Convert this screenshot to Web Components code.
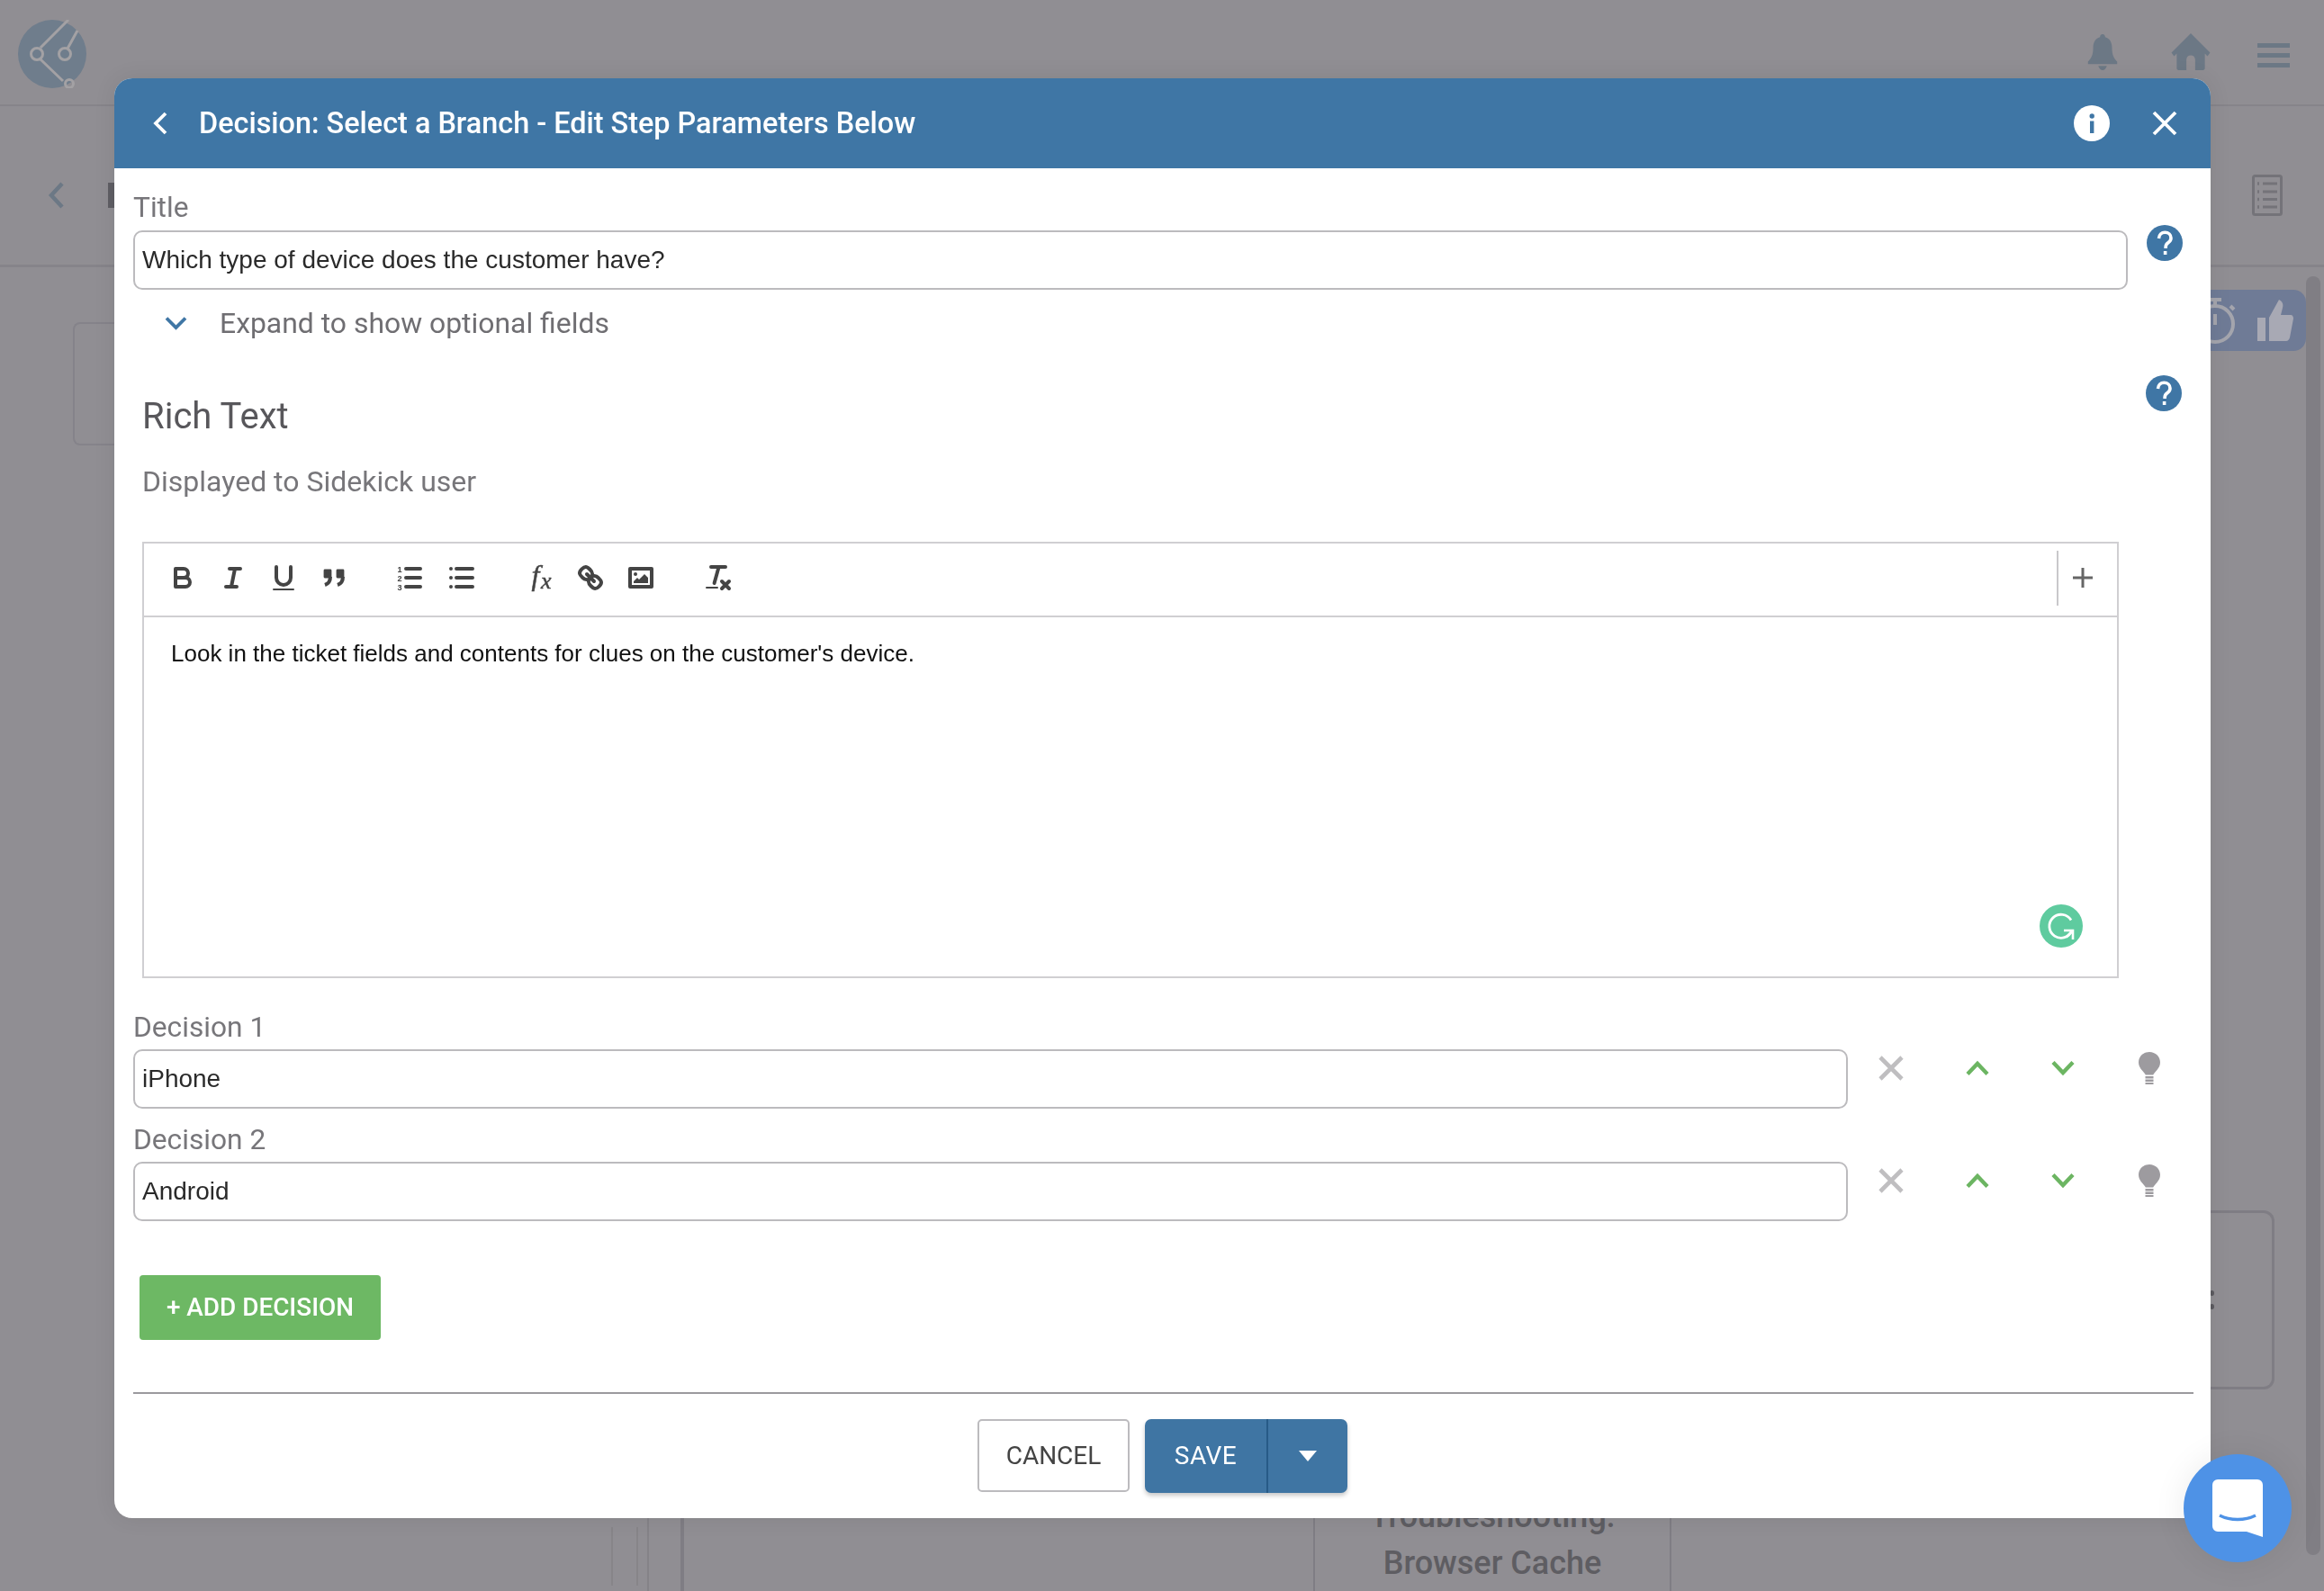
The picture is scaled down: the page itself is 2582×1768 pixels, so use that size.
<!DOCTYPE html>
<html lang="en"><head><meta charset="utf-8"><title>Decision</title>
<style>
html,body{margin:0;padding:0;width:2582px;height:1768px;overflow:hidden;background:#908e93;font-family:Roboto,"Liberation Sans",sans-serif}
</style></head><body>
<app-backdrop></app-backdrop>
<step-dialog heading="Decision: Select a Branch - Edit Step Parameters Below">
  <title-field label="Title" value="Which type of device does the customer have?"></title-field>
  <expand-row>Expand to show optional fields</expand-row>
  <rich-section heading="Rich Text" sub="Displayed to Sidekick user"></rich-section>
  <rich-editor>Look in the ticket fields and contents for clues on the customer's device.</rich-editor>
  <decision-row label="Decision 1" value="iPhone" style="margin-top:35px"></decision-row>
  <decision-row label="Decision 2" value="Android" style="margin-top:15px"></decision-row>
  <add-button>+ ADD DECISION</add-button>
  <dialog-footer></dialog-footer>
</step-dialog>
<chat-fab></chat-fab>
<script>
function def(name, html){
  customElements.define(name, class extends HTMLElement{
    connectedCallback(){
      if(this.shadowRoot) return;
      const r=this.attachShadow({mode:'open'});
      r.innerHTML = typeof html==='function' ? html(this) : html;
    }
  });
}
const ic = {
 help:`<svg width="40" height="40" viewBox="0 0 40 40"><circle cx="20" cy="20" r="20" fill="#3f76a5"/><path d="M13.500 15c.3-4.200 3-6.700 6.800-6.700 3.900 0 6.700 2.500 6.700 6.200 0 2.600-1.400 4-3.200 5.300-1.900 1.400-2.700 2.400-2.700 4.700v1.500" fill="none" stroke="#fff" stroke-width="3.600"/><rect x="18.800" y="29" width="3.600" height="4" fill="#fff"/></svg>`,
 x:`<svg width="30" height="30" viewBox="0 0 30 30"><path d="M3 3 27 27M27 3 3 27" stroke="#bfbec0" stroke-width="4.600" fill="none"/></svg>`,
 up:`<svg width="26" height="18" viewBox="0 0 26 18"><path d="M2 15.500 13 4 24 15.500" stroke="#6cb562" stroke-width="4.400" fill="none"/></svg>`,
 down:`<svg width="26" height="18" viewBox="0 0 26 18"><path d="M2 2.500 13 14 24 2.500" stroke="#6cb562" stroke-width="4.400" fill="none"/></svg>`,
 bulb:`<svg width="24" height="36" viewBox="0 0 24 36" fill="#9d9b9f"><path d="M12 0C5.300 0 0 5 0 11.500c0 3.500 1.500 6 3.500 8.500 1.800 2.200 3.500 4 4.300 5.500h8.400c.8-1.500 2.500-3.300 4.300-5.500 2-2.500 3.500-5 3.500-8.500C24 5 18.700 0 12 0z"/><rect x="7.500" y="27" width="9" height="2.500"/><rect x="7.500" y="30.500" width="9" height="2.500"/><rect x="7.500" y="34" width="9" height="2"/></svg>`
};

def('app-backdrop',`<style>
:host{display:block;width:2582px;height:1768px;color:#5c5b60}
.top{height:116px;border-bottom:2px solid #86848a;display:flex;align-items:flex-start}
.logo{margin:22px 0 0 20px}
.sp{flex:1}
.bell{margin-top:38px}
.home{margin:37px 0 0 59px}
.burger{margin:48px 38px 0 52px;width:36px;display:flex;flex-direction:column;gap:6px}
.burger i{display:block;height:5px;background:#6c7885}
.sub{height:154px;padding-top:22px;border-bottom:3px solid #86848a;display:flex;align-items:center}
.back{margin-left:52px}
.cut{width:8px;height:28px;background:#5f5e64;margin-left:46px}
.list{margin-left:auto;margin-right:46px}
.grid{display:grid;height:1471px;grid-template-columns:81px 676px 702px 398px 598px 72px 35px 16px 4px;grid-template-rows:25px 36px 32px 105px 850px 199px 116px 108px}
.lc{grid-column:2;grid-row:3/5;border:2px solid #85838a;border-right:0;border-radius:8px 0 0 8px}
.pill{grid-column:5/8;grid-row:2/4;background:#6f7b96;border-radius:0 14px 14px 0;display:flex;align-items:center;justify-content:flex-end;gap:22px;padding-right:14px}
.scroll{grid-column:8;grid-row:1/8;margin-top:10px;background:#807e84;border-radius:8px;margin-bottom:-68px}
.rc{grid-column:5/7;grid-row:6;border:3px solid #7f7d84;border-left:0;border-radius:0 12px 12px 0;display:flex;align-items:center;justify-content:center;box-sizing:border-box}
.dots{display:flex;flex-direction:column;gap:9px;margin-left:auto;margin-right:64px}
.dots i{width:5px;height:6px;border-radius:50%;background:#5c5b60;display:block}
.bl{grid-column:2;grid-row:8;border-right:4px solid #7f7d84;margin-right:-3px;display:flex;align-items:stretch}
.bl .f{margin:37px 0 6px 598px;width:26px;border:solid #878589;border-width:0 2px}
.bl .g{margin-left:10px;border-left:2px solid #858388}
.tc{grid-column:4;grid-row:7/9;border:solid #7f7d84;border-width:0 2px;text-align:center;font:500 36px/52px Roboto,sans-serif;padding-top:115px;color:#5e5d62}
</style>
<div class="top">
 <svg class="logo" width="76" height="76" viewBox="0 0 76 76"><circle cx="38" cy="38" r="38" fill="#6f7d8c"/><g fill="none" stroke="#a3a1a4" stroke-width="3"><path d="M25 31 56 0M25 44 50 68M55 32 66 12"/><circle cx="21" cy="38" r="6.500"/><circle cx="52" cy="38" r="6.500"/><circle cx="57" cy="71" r="4.500"/></g></svg>
 <div class="sp"></div>
 <svg class="bell" width="34" height="40" viewBox="0 0 34 42" fill="#6c7885"><path d="M17 0c-2 0-3 1.500-3 3.500C8 5.500 6 10 6 16c0 8-2 12-6 16v3h34v-3c-4-4-6-8-6-16 0-6-2-10.500-8-12.500C20 1.500 19 0 17 0z"/><path d="M12 37h10c-1 3-3 5-5 5s-4-2-5-5z"/></svg>
 <svg class="home" width="44" height="41" viewBox="0 0 44 42" fill="#6c7885"><path d="M22 0 0 22l3 4 3-3v17c0 1 1 2 2 2h9V30c0-3 2-5 5-5s5 2 5 5v12h9c1 0 2-1 2-2V23l3 3 3-4z"/></svg>
 <div class="burger"><i></i><i></i><i></i></div>
</div>
<div class="sub">
 <svg class="back" width="22" height="32" viewBox="0 0 22 32"><path d="M17 3 5 16l12 13" fill="none" stroke="#6c7885" stroke-width="4.500"/></svg>
 <div class="cut"></div>
 <svg class="list" width="34" height="46" viewBox="0 0 34 46" fill="none" stroke="#747379" stroke-width="3"><rect x="1.500" y="1.500" width="31" height="43" rx="2"/><path d="M12 10h16M12 19h16M12 27.500h16M12 36h16"/><path d="M6 10h2M6 19h2M6 27.500h2M6 36h2" stroke-width="3.500"/></svg>
</div>
<div class="grid">
 <div class="lc"></div>
 <div class="pill"><svg width="50" height="54" viewBox="0 0 50 54" fill="none" stroke="#a4a5ad" stroke-width="4"><circle cx="25" cy="31" r="20"/><path d="M18 4h14M25 4v7M25 20v12M42 11l4 4" /></svg><svg width="40" height="46" viewBox="0 0 40 46" fill="#a8a9b4"><rect y="20" width="9" height="26"/><path d="M13 20 24 0c4 2 5 5 4 9l-2 8h11c2 0 3 2 3 4l-4 21c-.5 2-2 4-4 4H13z"/></svg></div>
 <div class="scroll"></div>
 <div class="rc"><div class="dots"><i></i><i></i></div></div>
 <div class="bl"><div class="f"></div><div class="g"></div></div>
 <div class="tc">Troubleshooting:<br>Browser Cache</div>
</div>`);

def('step-dialog',d=>`<style>
:host{display:flex;flex-direction:column;position:fixed;left:127px;top:87px;width:2329px;height:1600px;background:#fff;border-radius:20px;overflow:hidden;box-shadow:0 0 24px rgba(0,0,0,.08)}
header{flex:none;height:100px;background:#3f76a5;display:flex;align-items:center;color:#fff}
.back{margin-left:41px;width:20px;flex:none}
h1{margin:0 0 0 33px;font:500 32.400px/1 Roboto,sans-serif;flex:1}
.info{margin-right:47px}
.close{margin-right:37px}
main{flex:1;padding:24px 0 0 21px;display:flex;flex-direction:column;align-items:stretch}
</style>
<header>
 <svg class="back" width="20" height="28" viewBox="0 0 20 28"><path d="M16 3 5 14l11 11" fill="none" stroke="#fff" stroke-width="3.800"/></svg>
 <h1>${d.getAttribute('heading')}</h1>
 <svg class="info" width="40" height="40" viewBox="0 0 40 40"><circle cx="20" cy="20" r="20" fill="#fff"/><rect x="18" y="17.500" width="4.400" height="13.500" fill="#3f76a5"/><circle cx="20.200" cy="12" r="2.700" fill="#3f76a5"/></svg>
 <svg class="close" width="28" height="28" viewBox="0 0 28 28"><path d="M2 2 26 26M26 2 2 26" stroke="#fff" stroke-width="3.800" fill="none"/></svg>
</header>
<main><slot></slot></main>`);

const inputCss=`.in{box-sizing:border-box;height:66px;border:2px solid #bcbbbe;border-radius:10px;padding-left:8px;display:flex;align-items:center;font:28px/1 "Liberation Sans",Arial,sans-serif;color:#2a2a2a;background:#fff}
.lb{height:38px;font:400 31.700px/40px Roboto,sans-serif;color:#77767a;white-space:nowrap}`;

def('title-field',d=>`<style>
:host{display:grid;grid-template-columns:2216px 81px;grid-template-rows:38px 66px;row-gap:7px}
${inputCss}
.help{grid-column:2;grid-row:2;justify-self:center;margin-top:-6px;height:40px}
</style><div class="lb">${d.getAttribute('label')}</div><div></div>
<div class="in">${d.getAttribute('value')}</div><div class="help">${ic.help}</div>`);

def('expand-row',`<style>
:host{display:flex;align-items:center;height:44px;margin-top:15px;font:400 31.900px/44px Roboto,sans-serif;color:#6f6e72}
svg{margin-left:35px;margin-right:36px;flex:none}
</style><svg width="25" height="16" viewBox="0 0 25 16"><path d="M2 2.500 12.500 13 23 2.500" fill="none" stroke="#3f76a5" stroke-width="3.800"/></svg><span><slot></slot></span>`);

def('rich-section',d=>`<style>
:host{display:grid;grid-template-columns:2215px 82px;margin-top:36px}
.t{margin:21px 0 0 10px;font:400 40px/50px Roboto,sans-serif;color:#58575b}
.s{margin:27px 0 0 10px;font:400 32px/40px Roboto,sans-serif;color:#77767a}
.help{justify-self:center;height:40px}
</style><div><div class="t">${d.getAttribute('heading')}</div><div class="s">${d.getAttribute('sub')}</div></div><div class="help">${ic.help}</div>`);

const S='fill="none" stroke="#444" stroke-width="2" stroke-linecap="round" stroke-linejoin="round"';
def('rich-editor',`<style>
:host{display:flex;flex-direction:column;box-sizing:border-box;width:2196px;height:485px;margin:47px 0 0 10px;border:2px solid #d0cfd2;background:#fff}
.bar{flex:none;height:76px;padding-bottom:4px;border-bottom:2px solid #d0cfd2;display:flex;align-items:center;padding-left:25px}
.b{width:36px;height:36px;margin-right:20px;flex:none}
.g{margin-left:28px;margin-right:22px}
.end{margin-left:auto;display:flex;align-items:center;box-sizing:border-box;height:61px;border-left:2px solid #c9c8cb;width:67px;justify-content:center;padding-right:12px}
.body{flex:1;position:relative;padding:21px 0 0 30px;font:26px/38px "Liberation Sans",Arial,sans-serif;color:#111}
.g-badge{position:absolute;right:38px;bottom:32px}
</style>
<div class="bar">
<svg class="b" viewBox="0 0 18 18" ${S}><path d="M5 4h4.500a2.500 2.500 0 0 1 0 5H5z"/><path d="M5 9h5.500a2.500 2.500 0 0 1 0 5H5z"/></svg>
<svg class="b" viewBox="0 0 18 18" ${S}><path d="M7 4h6M5 14h6M8 14l2-10"/></svg>
<svg class="b" viewBox="0 0 18 18" ${S}><path d="M5 3v6a4 4 0 0 0 4 4 4 4 0 0 0 4-4V3"/><rect x="3" y="15" width="12" height="1" rx=".5" fill="#444" stroke="none"/></svg>
<svg class="b" viewBox="0 0 18 18" fill="#444" stroke="#444" stroke-width="1.400" stroke-linejoin="round"><rect x="4" y="5" width="3" height="3.500"/><rect x="11" y="5" width="3" height="3.500"/><path d="M7 8.500c0 2.500-1 3.800-3 4.500M14 8.500c0 2.500-1 3.800-3 4.500" fill="none" stroke-width="2"/></svg>
<svg class="b g" viewBox="0 0 18 18" ${S}><path d="M7 4h8M7 9h8M7 14h8"/><g stroke="none" fill="#444" font-family="Liberation Sans,sans-serif" font-size="4.600" font-weight="700"><text x="2.200" y="5.800">1</text><text x="2.200" y="10.800">2</text><text x="2.200" y="15.800">3</text></g></svg>
<svg class="b" style="margin-right:52px" viewBox="0 0 18 18" ${S}><path d="M6 4h9M6 9h9M6 14h9M3 4h0M3 9h0M3 14h0"/></svg>
<svg class="b" style="margin-right:19px;overflow:visible" viewBox="0 0 18 18"><g fill="#444" stroke="#444" stroke-width=".25" font-family="Liberation Serif,serif" font-style="italic"><text x="3.800" y="13" font-size="16">f</text><text x="9" y="15" font-size="13">x</text></g></svg>
<svg class="b" style="margin-right:20px" viewBox="0 0 18 18" ${S}><path d="M7 7l4 4"/><path d="M8.900 4.600a3.500 3.500 0 0 1 .4 4.700 3.500 3.500 0 0 1-4.700-.4C3.200 7.500 2 6.400 4.200 4.200S7.500 3.200 8.900 4.600z"/><path d="M13.400 9.100a3.500 3.500 0 0 0-4.700-.4 3.500 3.500 0 0 0 .4 4.700c1.400 1.400 2.500 2.600 4.700.4s1-3.300-.4-4.700z"/></svg>
<svg class="b" style="margin-right:50px" viewBox="0 0 18 18" ${S}><rect x="3" y="4" width="12" height="10"/><circle cx="6" cy="7" r="1" fill="#444" stroke="none"/><path d="M5 12v-1l2-2 1 1 3-3 2 2v3z" fill="#444" stroke="none"/></svg>
<svg class="b" viewBox="0 0 18 18" ${S}><path d="M5 3h8M6.800 12 9.300 3M11 11l4 4M15 11l-4 4"/><rect x="2" y="14" width="7" height="1" rx=".5" fill="#444" stroke="none"/></svg>
<div class="end"><svg width="26" height="26" viewBox="0 0 26 26"><path d="M13 2v22M2 13h22" stroke="#666" stroke-width="3" fill="none"/></svg></div>
</div>
<div class="body"><slot></slot>
<svg class="g-badge" width="48" height="48" viewBox="0 0 48 48"><circle cx="24" cy="24" r="24" fill="#5fcb9f"/><path d="M35 17.500A13 13 0 1 0 36 29" fill="none" stroke="#fff" stroke-width="2.800"/><path d="M27 29h10v10M37 29 29.500 36.500" fill="none" stroke="#fff" stroke-width="2.600"/></svg></div>`);

def('decision-row',d=>`<style>
:host{display:grid;grid-template-columns:1905px 383px;grid-template-rows:38px 66px;row-gap:6px}
${inputCss}
.acts{display:flex;grid-column:2;grid-row:2;height:42px;align-items:center}
.c{width:96px;display:flex;justify-content:center;align-items:center}
</style><div class="lb">${d.getAttribute('label')}</div><div></div>
<div class="in">${d.getAttribute('value')}</div>
<div class="acts"><span class="c">${ic.x}</span><span class="c">${ic.up}</span><span class="c">${ic.down}</span><span class="c">${ic.bulb}</span></div>`);

def('add-button',`<style>
:host{display:flex;align-items:center;justify-content:center;align-self:flex-start;width:268px;height:72px;margin:60px 0 0 7px;background:#6db864;color:#fff;border-radius:4px;font:500 27.900px/1 Roboto,sans-serif;white-space:nowrap}
</style><slot></slot>`);

def('dialog-footer',`<style>
:host{display:block;margin-top:58px}
hr{height:2px;border:0;margin:0 19px 0 0;background:#9b9a9e}
.btns{display:flex;justify-content:center;margin:28px 0 0 -2px;align-items:stretch;padding-right:19px}
.c{box-sizing:border-box;width:169px;height:81px;border:2px solid #bcbbbe;border-radius:5px;display:flex;align-items:center;justify-content:center;font:400 28px/1 Roboto,sans-serif;color:#444}
.s{margin-left:17px;width:225px;height:82px;display:flex;background:#3f75a3;border-radius:7px;color:#fff;box-shadow:0 3px 5px rgba(0,0,0,.22);font:400 28px/1 Roboto,sans-serif;letter-spacing:.5px}
.s span{width:135px;border-right:2px solid #275b87;display:flex;align-items:center;justify-content:center}
.s div{flex:1;display:flex;align-items:center;justify-content:center}
</style><hr><div class="btns"><div class="c">CANCEL</div><div class="s"><span>SAVE</span><div><svg width="20" height="12" viewBox="0 0 20 12"><path d="M0 0h20L10 12z" fill="#fff"/></svg></div></div></div>`);

def('chat-fab',`<style>
:host{display:block;position:fixed;left:2426px;top:1616px;width:120px;height:120px;border-radius:50%;background:#4e92e6;box-shadow:0 0 36px rgba(0,0,0,.08)}
svg{display:block;margin:28px 0 0 32px}
</style><svg width="56" height="64" viewBox="0 0 56 64"><path d="M6 0h44a6 6 0 0 1 6 6v58l-18-6H6a6 6 0 0 1-6-6V6a6 6 0 0 1 6-6z" fill="#fff"/><path d="M8 40c12 6 28 6 40 0" fill="none" stroke="#4e92e6" stroke-width="3.400"/></svg>`);
</script>
</body></html>
